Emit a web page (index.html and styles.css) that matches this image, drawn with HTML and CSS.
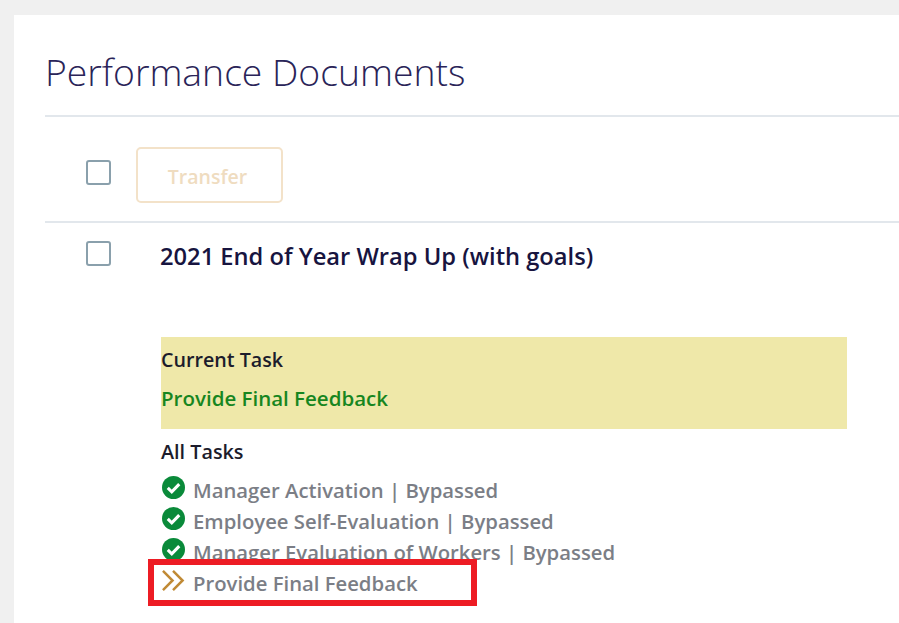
FILE: index.html
```html
<!doctype html>
<html lang="en">
<head>
    <meta charset="UTF-8">
    <title>Performance Documents</title>
    <link rel="stylesheet" href="styles.css">
</head>
<body>
    <div class="card">
        <h1 class="pageTitle">Performance Documents</h1>
        <div class="toolbar">
            <span class="check"></span>
            <button class="btnTransfer" type="button">Transfer</button>
        </div>
        <div class="docRow">
            <span class="check"></span>
            <div class="docBody">
                <div class="docTitle">2021 End of Year Wrap Up (with goals)</div>
                <div class="currentTask">
                    <div class="taskLabel">Current Task</div>
                    <div class="taskName">Provide Final Feedback</div>
                </div>
                <div class="allTasks">All Tasks</div>
                <ul class="taskList">
                    <li>
                        <svg class="taskIcon" viewBox="0 0 24 24"><circle cx="12" cy="12" r="12" fill="#0a8a3a"/><path d="M6 12.5l4.2 4L18 8.5" fill="none" stroke="#fff" stroke-width="3.2"/></svg>
                        Manager Activation | Bypassed
                    </li>
                    <li>
                        <svg class="taskIcon" viewBox="0 0 24 24"><circle cx="12" cy="12" r="12" fill="#0a8a3a"/><path d="M6 12.5l4.2 4L18 8.5" fill="none" stroke="#fff" stroke-width="3.2"/></svg>
                        Employee Self-Evaluation | Bypassed
                    </li>
                    <li>
                        <svg class="taskIcon" viewBox="0 0 24 24"><circle cx="12" cy="12" r="12" fill="#0a8a3a"/><path d="M6 12.5l4.2 4L18 8.5" fill="none" stroke="#fff" stroke-width="3.2"/></svg>
                        Manager Evaluation of Workers | Bypassed
                    </li>
                    <li>
                        <svg class="taskIcon" viewBox="0 0 24 24"><path d="M1 2l10 10-10 10M11.500 2l10 10-10 10" fill="none" stroke="#c08a35" stroke-width="2.600"/></svg>
                        Provide Final Feedback
                    </li>
                </ul>
            </div>
        </div>
    </div>
    <div class="highlight"></div>
</body>
</html>
```

FILE: styles.css
```css
*{
    padding: 0;
    margin: 0;
    box-sizing: border-box;
}
html,body{
    height: 100%;
    overflow: hidden;
}
body{
    background: #f0f0f0;
    padding: 15px 0 0 14px;
    font-family: "Open Sans", "Noto Sans", sans-serif;
}
.card{
    background: #fff;
    height: 608px;
    padding-left: 31px;
    overflow: hidden;
}
.pageTitle{
    height: 102px;
    border-bottom: 2px solid #e2e7ec;
    padding-top: 32px;
    font-size: 37.300px;
    line-height: 50px;
    font-weight: 300;
    color: #2a2458;
}
.toolbar{
    height: 106px;
    border-bottom: 2px solid #e2e7ec;
    display: flex;
    align-items: flex-start;
    padding: 30px 0 0 41px;
    gap: 25px;
}
.toolbar .check{
    margin-top: 13px;
}
.check{
    display: block;
    flex: none;
    width: 25px;
    height: 25px;
    border: 2px solid #8aa0ac;
    border-radius: 3px;
    background: #fff;
}
.btnTransfer{
    width: 147px;
    height: 56px;
    padding: 2px 4px 0 0;
    background: #fff;
    border: 2px solid #f3e2c9;
    border-radius: 5px;
    font-family: inherit;
    font-size: 19.500px;
    font-weight: 600;
    color: #efdcc0;
}
.docRow{
    display: flex;
    padding: 18px 0 0 41px;
    margin-right: 52px;
}
.docBody{
    flex: 1;
    margin-left: 49px;
}
.docTitle{
    height: 32px;
    font-size: 23.700px;
    line-height: 30px;
    font-weight: 600;
    color: #17143f;
}
.currentTask{
    margin: 64px 0 0 1px;
    height: 92px;
    background: #efe8a9;
    padding-top: 8px;
}
.taskLabel{
    font-size: 19.700px;
    line-height: 30px;
    font-weight: 600;
    color: #1c1c2c;
}
.taskName{
    font-size: 20.500px;
    line-height: 30px;
    margin-top: 8px;
    font-weight: 600;
    color: #17861f;
}
.allTasks{
    margin: 8px 0 0 1px;
    font-size: 19.800px;
    line-height: 30px;
    font-weight: 600;
    color: #1c1c2c;
}
.taskList{
    list-style: none;
    margin-top: 7px;
}
.taskList li{
    display: flex;
    align-items: center;
    gap: 8px;
    height: 31px;
    font-size: 20.300px;
    font-weight: 600;
    color: #7b7e86;
    white-space: nowrap;
}
.taskIcon{
    flex: none;
    width: 23px;
    height: 23px;
    margin: -5px 0 0 2px;
}
.highlight{
    position: absolute;
    left: 148px;
    top: 559px;
    width: 329px;
    height: 47px;
    border: 6px solid #ed1c24;
}
```
